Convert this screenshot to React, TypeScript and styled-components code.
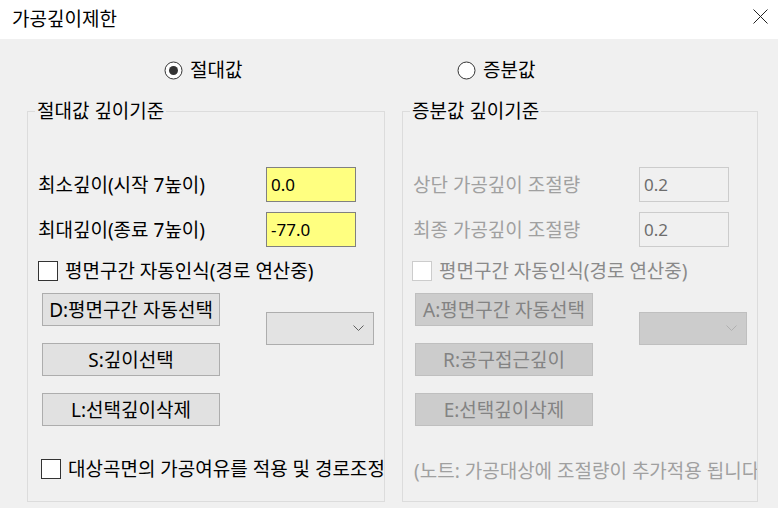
import React from "react";
import styled, {createGlobalStyle} from "styled-components";

const GlobalStyle = createGlobalStyle`
  html, body {
    margin: 0;
    padding: 0;
    background: #f0f0f0;
  }
  body {
    font-family: "Noto Sans", "Noto Sans CJK KR", sans-serif;
    font-size: 19px;
    color: #000;
    overflow: hidden;
  }
`;

const Window = styled.div`
  width: 778px;
  height: 508px;
  display: flex;
  flex-direction: column;
  background: #f0f0f0;
`;

const TitleBar = styled.div`
  height: 39px;
  flex: 0 0 39px;
  background: #fff;
  display: flex;
  align-items: center;
  justify-content: space-between;
  padding: 0 10px 0 12px;
  box-sizing: border-box;
`;

const Title = styled.span`
  line-height: 22px;
  margin-top: -2px;
`;

const CloseButton = styled.div`
  width: 15px;
  height: 15px;
  display: flex;
  margin-top: -6px;
`;

const Body = styled.div`
  display: grid;
  grid-template-columns: 358px 356px;
  grid-template-rows: 62px 401px;
  column-gap: 17px;
  padding: 0 20px 0 27px;
`;

const RadioOption = styled.label<{ $offset: number }>`
  display: flex;
  align-items: center;
  gap: 7px;
  margin-left: ${p => p.$offset}px;
  line-height: 22px;
`;

const GroupBox = styled.fieldset`
  margin: 0;
  padding: 0;
  min-width: 0;
  border: 1px solid #dcdcdc;
  display: flex;
  flex-direction: column;
`;

const Legend = styled.legend`
  margin-left: 7px;
  padding: 0 2px;
  line-height: 20px;
`;

const Content = styled.div`
  flex: 1;
  overflow: hidden;
  white-space: nowrap;
  padding: 46px 0 0 10px;
  display: flex;
  flex-direction: column;
`;

const FieldRow = styled.div<{ $labelWidth: number; $disabled?: boolean }>`
  display: flex;
  align-items: center;
  height: 35px;
  color: ${p => (p.$disabled ? "#a0a0a0" : "#000")};
  & + & {
    margin-top: 10px;
  }
  & > span {
    flex: 0 0 ${p => p.$labelWidth}px;
    line-height: 22px;
  }
`;

const TextBox = styled.div<{ $disabled?: boolean }>`
  width: 90px;
  height: 35px;
  box-sizing: border-box;
  border: 1px solid ${p => (p.$disabled ? "#cccccc" : "#808080")};
  background: ${p => (p.$disabled ? "#f0f0f0" : "#ffff80")};
  color: ${p => (p.$disabled ? "#6d6d6d" : "#000")};
  padding: 0 4px;
  display: flex;
  align-items: center;
  font-size: 17px;
  line-height: 20px;
`;

const CheckRow = styled.label<{ $top: number; $left?: number; $disabled?: boolean }>`
  display: flex;
  align-items: center;
  gap: 7px;
  height: 20px;
  margin-top: ${p => p.$top}px;
  margin-left: ${p => p.$left ?? 0}px;
  line-height: 22px;
  color: ${p => (p.$disabled ? "#8a8a8a" : "#000")};
`;

const CheckBox = styled.span<{ $disabled?: boolean }>`
  width: 20px;
  height: 20px;
  flex: 0 0 20px;
  box-sizing: border-box;
  border: 1px solid ${p => (p.$disabled ? "#cccccc" : "#333333")};
  background: #fff;
`;

const ButtonArea = styled.div<{ $left: number }>`
  display: flex;
  gap: 46px;
  margin-top: 12px;
  margin-left: ${p => p.$left}px;
`;

const ButtonColumn = styled.div`
  display: flex;
  flex-direction: column;
  gap: 17px;
`;

const Button = styled.button<{ $disabled?: boolean }>`
  width: 178px;
  height: 33px;
  box-sizing: border-box;
  margin: 0;
  padding: 0;
  font: inherit;
  line-height: 22px;
  white-space: nowrap;
  overflow: hidden;
  border: 1px solid ${p => (p.$disabled ? "#bfbfbf" : "#adadad")};
  background: ${p => (p.$disabled ? "#cccccc" : "#e1e1e1")};
  color: ${p => (p.$disabled ? "#838383" : "#000")};
`;

const Combo = styled.div<{ $disabled?: boolean }>`
  width: 108px;
  height: 33px;
  box-sizing: border-box;
  margin-top: 19px;
  border: 1px solid ${p => (p.$disabled ? "#bfbfbf" : "#adadad")};
  background: ${p => (p.$disabled ? "#cccccc" : "#e3e3e3")};
  display: flex;
  align-items: center;
  justify-content: flex-end;
  padding-right: 9px;
`;

const Note = styled.div`
  margin-top: 35px;
  margin-left: 1px;
  line-height: 20px;
  color: #a0a0a0;
`;

const Radio = ({checked}: { checked?: boolean }) => (
  <svg width="19" height="19" viewBox="0 0 19 19">
    <circle cx="9.5" cy="9.5" r="8.5" fill="#fff" stroke="#333" strokeWidth="1"/>
    {checked && <circle cx="9.5" cy="9.5" r="4.5" fill="#333"/>}
  </svg>
);

const Chevron = ({color}: { color: string }) => (
  <svg width="11" height="7" viewBox="0 0 11 7">
    <polyline points="0.5,0.5 5.5,5.5 10.5,0.5" fill="none" stroke={color} strokeWidth="1"/>
  </svg>
);

export default function App() {
  return (
    <Window>
      <GlobalStyle/>
      <TitleBar>
        <Title>가공깊이제한</Title>
        <CloseButton>
          <svg width="15" height="15" viewBox="0 0 15 15">
            <path d="M0.5 0.5 L14.5 14.5 M14.5 0.5 L0.5 14.5" stroke="#222" strokeWidth="1"/>
          </svg>
        </CloseButton>
      </TitleBar>
      <Body>
        <RadioOption $offset={137}>
          <Radio checked/>
          <span>절대값</span>
        </RadioOption>
        <RadioOption $offset={55}>
          <Radio/>
          <span>증분값</span>
        </RadioOption>

        <GroupBox>
          <Legend>절대값 깊이기준</Legend>
          <Content>
            <FieldRow $labelWidth={228}>
              <span>최소깊이(시작 7높이)</span>
              <TextBox>0.0</TextBox>
            </FieldRow>
            <FieldRow $labelWidth={228}>
              <span>최대깊이(종료 7높이)</span>
              <TextBox>-77.0</TextBox>
            </FieldRow>
            <CheckRow $top={14}>
              <CheckBox/>
              <span>평면구간 자동인식(경로 연산중)</span>
            </CheckRow>
            <ButtonArea $left={4}>
              <ButtonColumn>
                <Button>D:평면구간 자동선택</Button>
                <Button>S:깊이선택</Button>
                <Button>L:선택깊이삭제</Button>
              </ButtonColumn>
              <Combo>
                <Chevron color="#606060"/>
              </Combo>
            </ButtonArea>
            <CheckRow $top={33} $left={3}>
              <CheckBox/>
              <span>대상곡면의 가공여유를 적용 및 경로조정</span>
            </CheckRow>
          </Content>
        </GroupBox>

        <GroupBox>
          <Legend>증분값 깊이기준</Legend>
          <Content>
            <FieldRow $labelWidth={226} $disabled>
              <span>상단 가공깊이 조절량</span>
              <TextBox $disabled>0.2</TextBox>
            </FieldRow>
            <FieldRow $labelWidth={226} $disabled>
              <span>최종 가공깊이 조절량</span>
              <TextBox $disabled>0.2</TextBox>
            </FieldRow>
            <CheckRow $top={14} $left={-1} $disabled>
              <CheckBox $disabled/>
              <span>평면구간 자동인식(경로 연산중)</span>
            </CheckRow>
            <ButtonArea $left={2}>
              <ButtonColumn>
                <Button $disabled disabled>A:평면구간 자동선택</Button>
                <Button $disabled disabled>R:공구접근깊이</Button>
                <Button $disabled disabled>E:선택깊이삭제</Button>
              </ButtonColumn>
              <Combo $disabled>
                <Chevron color="#b0b0b0"/>
              </Combo>
            </ButtonArea>
            <Note>(노트: 가공대상에 조절량이 추가적용 됩니다)</Note>
          </Content>
        </GroupBox>
      </Body>
    </Window>
  );
}
